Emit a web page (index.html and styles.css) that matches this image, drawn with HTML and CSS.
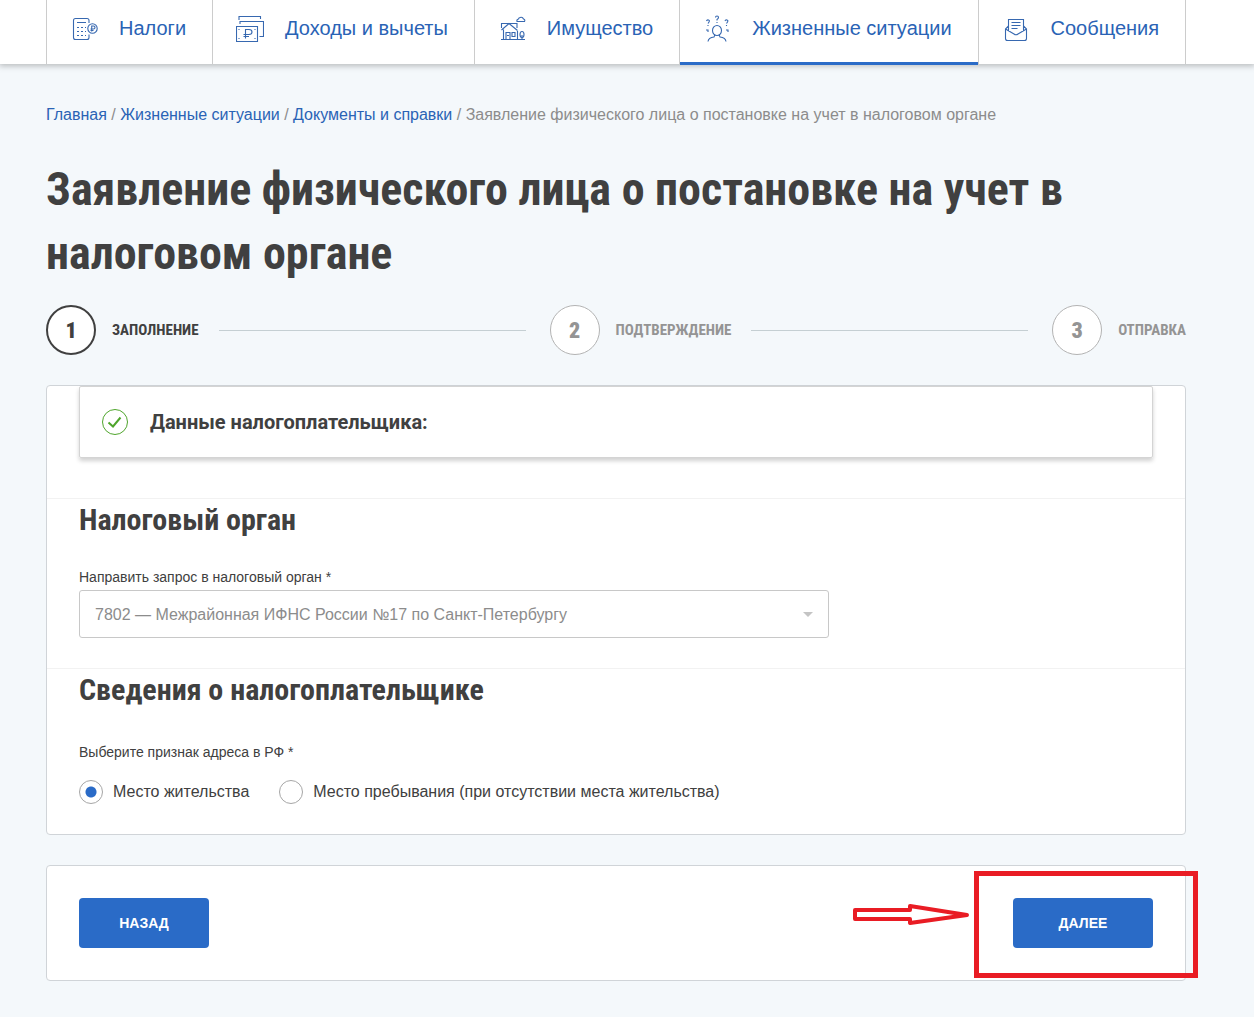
FILE: index.html
```html
<!DOCTYPE html>
<html lang="ru">
<head>
<meta charset="UTF-8">
<meta name="viewport" content="width=device-width, initial-scale=1.0">
<title>Заявление физического лица о постановке на учет</title>
<link rel="stylesheet" href="styles.css">
</head>
<body>

<header>
    <nav>
        <a href="#taxes">
            <svg viewBox="0 0 28 28">
                <path d="M19 9V6.500Q19 4.500 17 4.500H5.500Q3.500 4.500 3.500 6.500V23.500Q3.500 25.500 5.500 25.500H17Q19 25.500 19 23.500V20.500M7 8.500H16"/>
                <path stroke-dasharray="2 2" d="M7 13.500H16M7 17.500H16M7 21.500H16"/>
                <circle cx="22.500" cy="14.500" r="4.700"/>
                <path d="M21.700 17.500V12H23.500Q25 12 25 13.500T23.500 15H20.500M20.500 16.500H23.500"/>
            </svg>
            Налоги
        </a>
        <a href="#income">
            <svg viewBox="0 0 28 28">
                <path d="M.500 12.500H21.500V27.500H.500ZM4 10V7.500H27.500V22.500H23.500M3 6V2.500H24.500V5"/>
                <path d="M9.500 24.500V15.500H13Q16 15.500 16 18T13 20.500H7.500M7.500 22.500H13"/>
                <path stroke-dasharray="1 8" d="M3 15V25M19 15V25"/>
            </svg>
            Доходы и вычеты
        </a>
        <a href="#property">
            <svg viewBox="0 0 28 28">
                <path d="M3 25.500H27M3.500 16L11 9.500L19.500 16.500M3.500 14V9.500H19V14M5.500 25V15.500M8 25V18.500H12V25M9 21.500H11M14 18.500H17V22.500H14ZM19.500 17V25"/>
                <ellipse cx="24" cy="20.500" rx="2" ry="3"/>
                <path d="M24 21V25M19 7.500H26.500Q27.500 5.500 25.500 5Q24.500 2.500 22 3.500Q20.500 4 20.500 5Q18.500 5.500 19 7.500Z"/>
            </svg>
            Имущество
        </a>
        <a href="#situations" class="active">
            <svg viewBox="0 0 28 28">
                <ellipse cx="14" cy="16.500" rx="4.500" ry="5"/>
                <path d="M5 27.500Q5.500 23.500 11 23L12 20.500M23 27.500Q22.500 23.500 17 23L16 20.500"/>
                <path d="M12.500 3.500Q12.500 2 14 2T15.500 3.500Q15.500 4.500 14 5.500V6.500M14 8V9M3.500 7Q4 5.500 5.500 6T6 8L5 9.500M5 11V12M22 7Q22.500 5.500 24 6T24.500 8L23.500 9.500M23.500 11V12M3 16H5V18M23 16H25V18"/>
            </svg>
            Жизненные ситуации
        </a>
        <a href="#messages">
            <svg viewBox="0 0 28 28">
                <path d="M6.500 18V5.500H21.500V18M6.500 12L3.500 15V24.500Q3.500 26.500 5.500 26.500H22.500Q24.500 26.500 24.500 24.500V15L21.500 12M3.500 15L12 20Q14 21.500 16 20L24.500 15M9.500 8.500H18.500M9.500 11.500H18.500M9.500 14.500H15.500"/>
            </svg>
            Сообщения
        </a>
    </nav>
</header>

<main>
    <div class="breadcrumbs">
        <a href="#main">Главная</a> / <a href="#situations">Жизненные ситуации</a> / <a href="#documents">Документы и справки</a> / <span>Заявление физического лица о постановке на учет в налоговом органе</span>
    </div>

    <h1>Заявление физического лица о постановке на учет в налоговом органе</h1>

    <div class="steps">
        <div class="step current"><b>1</b><span>Заполнение</span></div>
        <div class="line"></div>
        <div class="step"><b>2</b><span>Подтверждение</span></div>
        <div class="line"></div>
        <div class="step"><b>3</b><span>Отправка</span></div>
    </div>

    <form>
        <div class="card">
            <div class="taxpayer">
                <svg viewBox="0 0 28 28">
                    <circle cx="14" cy="14" r="12.500"/>
                    <path d="M7.500 14.500L12 18.500L19.500 9.500" stroke-width="2"/>
                </svg>
                <strong>Данные налогоплательщика:</strong>
            </div>

            <section>
                <h2>Налоговый орган</h2>
                <label class="caption" for="office">Направить запрос в налоговый орган *</label>
                <div class="select">
                    <select id="office">
                        <option>7802 — Межрайонная ИФНС России №17 по Санкт-Петербургу</option>
                    </select>
                </div>
            </section>

            <section>
                <h2>Сведения о налогоплательщике</h2>
                <div class="caption address" id="address">Выберите признак адреса в РФ *</div>
                <div class="radios" role="radiogroup" aria-labelledby="address">
                    <label><input type="radio" name="address" checked>Место жительства</label>
                    <label><input type="radio" name="address">Место пребывания (при отсутствии места жительства)</label>
                </div>
            </section>
        </div>

        <div class="card buttons">
            <button type="button">Назад</button>
            <div class="next">
                <button type="button">Далее</button>
                <!-- подсказка: куда нажимать -->
                <div class="frame"></div>
                <svg class="arrow" viewBox="0 0 120 24">
                    <path d="M4 7H59V3L116 12L59 20V16H4Z"/>
                </svg>
            </div>
        </div>
    </form>
</main>

</body>
</html>
```
FILE: styles.css
```css
* {
    box-sizing: border-box;
}
body {
    font-family: "Liberation Sans", Arial, sans-serif;
    font-size: 16px;
    margin: 0;
    color: #404040;
    background-color: #f4f8fb;
}
a {
    color: #2a63b5;
    text-decoration: none;
}

/* верхнее меню */
header {
    background-color: #fff;
    padding: 0 68px 0 46px;
    box-shadow: 0 1px 6px 1px rgba(0, 0, 0, 0.25);
}
nav {
    display: flex;
    height: 64px;
    border-right: 1px solid #ccc;
}
nav a {
    display: flex;
    flex: 1 0 auto;
    align-items: center;
    gap: 21px;
    padding: 0 22px 8px 23px;
    border-left: 1px solid #ccc;
    font-size: 20px;
    position: relative;
}
nav a.active::after {
    content: "";
    position: absolute;
    left: 0;
    right: 0;
    bottom: -1px;
    height: 3px;
    background-color: #2a6bc7;
}
nav svg {
    width: 28px;
    height: 28px;
    fill: none;
    stroke: #3768b0;
    stroke-width: 1.1;
}

main {
    padding: 41px 68px 36px 46px;
}
.breadcrumbs {
    line-height: 20px;
    color: #8c8c8c;
}
h1, h2, .step {
    font-family: "Liberation Sans Narrow", "Arial Narrow", "Roboto Condensed", Roboto, sans-serif;
    font-weight: bold;
}
h1 {
    font-size: 46px;
    line-height: 64px;
    margin: 32px 0 20px;
}

/* шаги */
.steps {
    display: flex;
    align-items: center;
    margin-bottom: 30px;
}
.step {
    display: flex;
    align-items: center;
    gap: 16px;
    color: #949494;
    font-size: 15px;
    text-transform: uppercase;
}
.step b {
    display: flex;
    align-items: center;
    justify-content: center;
    width: 50px;
    height: 50px;
    border: 1px solid #b3b3b3;
    border-radius: 50%;
    background-color: #fff;
    font-size: 22px;
}
.step.current {
    color: #404040;
}
.step.current b {
    border: 2px solid #404040;
}
.line {
    flex: 304;
    height: 1px;
    margin: 0 24px 0 20px;
    background-color: #c5cfd3;
}
.step + .line ~ .line {
    flex: 274;
}

/* форма */
.card {
    background-color: #fff;
    border: 1px solid #d0d4d8;
    border-radius: 4px;
    margin-bottom: 30px;
}
.taxpayer {
    display: flex;
    align-items: center;
    gap: 21px;
    height: 72px;
    margin: 0 32px 40px;
    padding: 0 21px;
    border: 1px solid #d4d4d4;
    border-radius: 2px;
    box-shadow: 0 3px 4px rgba(0, 0, 0, 0.18);
}
.taxpayer svg {
    width: 28px;
    height: 28px;
    fill: none;
    stroke: #4fa52c;
}
.taxpayer strong {
    font-family: Roboto, sans-serif;
    font-size: 20px;
}
section {
    padding: 0 32px 30px;
    border-top: 1px solid #f2f2f2;
}
h2 {
    font-size: 30px;
    line-height: 42px;
    margin: 0 0 28px;
}
.caption {
    display: block;
    font-size: 14px;
    line-height: 16px;
    margin-bottom: 5px;
}
.address {
    margin: 33px 0 20px;
}
.select {
    position: relative;
    max-width: 750px;
}
.select::after {
    content: "";
    position: absolute;
    right: 16px;
    top: 22px;
    border: 5px solid transparent;
    border-top-color: #c4c4c4;
    border-bottom: 0;
}
select {
    display: block;
    appearance: none;
    width: 100%;
    height: 48px;
    padding: 0 15px;
    border: 1px solid #c8c8c8;
    border-radius: 3px;
    background-color: #fff;
    color: #8c8c8c;
    font: inherit;
}
.radios {
    display: flex;
    gap: 30px;
}
.radios label {
    display: flex;
    align-items: center;
    gap: 10px;
}
input {
    appearance: none;
    width: 24px;
    height: 24px;
    margin: 0;
    border: 1px solid #a6a6a6;
    border-radius: 50%;
}
input:checked {
    background: radial-gradient(circle, #2a6bc7 5px, #fff 6px);
}

/* кнопки */
.buttons {
    display: flex;
    justify-content: space-between;
    padding: 32px;
    margin-bottom: 0;
}
button {
    width: 130px;
    height: 50px;
    border: 0;
    border-radius: 4px;
    background-color: #2a6bc7;
    color: #fff;
    font: bold 14px "Liberation Sans", Arial, sans-serif;
    text-transform: uppercase;
}
.next {
    position: relative;
}
.next button {
    width: 140px;
}
.frame {
    position: absolute;
    top: -27px;
    right: -45px;
    bottom: -30px;
    left: -39px;
    border: 5px solid #e91c24;
    pointer-events: none;
}
.arrow {
    position: absolute;
    top: 5px;
    right: 182px;
    width: 120px;
    height: 24px;
    fill: none;
    stroke: #e91c24;
    stroke-width: 4;
    stroke-linejoin: round;
}
```
